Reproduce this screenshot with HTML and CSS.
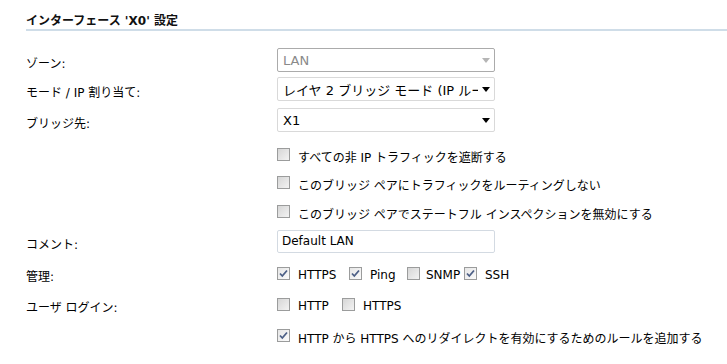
FILE: index.html
```html
<!DOCTYPE html>
<html lang="ja">

<head>
  <meta charset="UTF-8">
  <title>インターフェース設定</title>
  <link rel="stylesheet" href="styles.css">
</head>
<body>
  <div class="panel">
    <h2 class="title">インターフェース 'X0' 設定</h2>

    <!-- ゾーン / モード / ブリッジ -->
    <div class="row ctl zone">
      <div class="label">ゾーン:</div>
      <div class="select disabled">
        <span class="value">LAN</span>
        <svg class="arrow" width="8" height="5" viewBox="0 0 8 5"><polygon points="0,0 8,0 4,5"/></svg>
      </div>
    </div>
    <div class="row ctl">
      <div class="label">モード / IP 割り当て:</div>
      <div class="select">
        <span class="value">レイヤ 2 ブリッジ モード (IP ルーティングなし)</span>
        <svg class="arrow" width="8" height="5" viewBox="0 0 8 5"><polygon points="0,0 8,0 4,5"/></svg>
      </div>
    </div>
    <div class="row ctl bridge">
      <div class="label">ブリッジ先:</div>
      <div class="select">
        <span class="value">X1</span>
        <svg class="arrow" width="8" height="5" viewBox="0 0 8 5"><polygon points="0,0 8,0 4,5"/></svg>
      </div>
    </div>

    <!-- ブリッジ オプション -->
    <div class="row check first-check">
      <div class="label"></div>
      <div class="opts">
        <label class="opt"><span class="cb"></span>すべての非 IP トラフィックを遮断する</label>
      </div>
    </div>
    <div class="row check tight">
      <div class="label"></div>
      <div class="opts">
        <label class="opt"><span class="cb"></span>このブリッジ ペアにトラフィックをルーティングしない</label>
      </div>
    </div>
    <div class="row check">
      <div class="label"></div>
      <div class="opts">
        <label class="opt"><span class="cb"></span>このブリッジ ペアでステートフル インスペクションを無効にする</label>
      </div>
    </div>

    <!-- コメント -->
    <div class="row ctl comment">
      <div class="label">コメント:</div>
      <input class="text-input" type="text" value="Default LAN">
    </div>

    <!-- 管理 -->
    <div class="row check manage">
      <div class="label">管理:</div>
      <div class="opts">
        <label class="opt w72"><span class="cb on"><svg width="11" height="11" viewBox="0 0 11 11"><path d="M2 5.5 L4.3 8 L9 2.5"/></svg></span>HTTPS</label>
        <label class="opt w58"><span class="cb on"><svg width="11" height="11" viewBox="0 0 11 11"><path d="M2 5.5 L4.3 8 L9 2.5"/></svg></span>Ping</label>
        <label class="opt w57 near"><span class="cb"></span>SNMP</label>
        <label class="opt"><span class="cb on"><svg width="11" height="11" viewBox="0 0 11 11"><path d="M2 5.5 L4.3 8 L9 2.5"/></svg></span>SSH</label>
      </div>
    </div>

    <!-- ユーザ ログイン -->
    <div class="row check login">
      <div class="label">ユーザ ログイン:</div>
      <div class="opts">
        <label class="opt w65"><span class="cb"></span>HTTP</label>
        <label class="opt"><span class="cb"></span>HTTPS</label>
      </div>
    </div>
    <div class="row check login">
      <div class="label"></div>
      <div class="opts">
        <label class="opt"><span class="cb on"><svg width="11" height="11" viewBox="0 0 11 11"><path d="M2 5.5 L4.3 8 L9 2.5"/></svg></span>HTTP から HTTPS へのリダイレクトを有効にするためのルールを追加する</label>
      </div>
    </div>
  </div>
</body>

</html>
```

FILE: styles.css
```css
/* 共通 */
body {
  margin: 0;
  background: #fff;
  color: #000;
  font-family: "DejaVu Sans", "Noto Sans CJK JP", sans-serif;
  font-size: 12px;
}

.panel {
  padding-left: 26px;
}

.title {
  margin: 0;
  padding-top: 14px;
  height: 15px;
  line-height: 15px;
  font-size: 12px;
  font-weight: bold;
  color: #111;
  border-bottom: 2px solid #cfdde8;
}

/* 行 */
.row {
  display: grid;
  grid-template-columns: 251px 1fr;
  align-items: center;
  height: 24px;
  margin-top: 5px;
}

.row.zone {
  margin-top: 17px;
}

.row.bridge {
  margin-top: 7px;
}

.row.first-check {
  margin-top: 12px;
}

.row.tight {
  margin-top: 4px;
}

.row.comment {
  margin-top: 4px;
}

.row.manage {
  margin-top: 10px;
}

.row.login {
  margin-top: 7px;
}

.row.ctl .label {
  padding-top: 5px;
}

/* セレクト */
.select {
  box-sizing: border-box;
  width: 218px;
  height: 24px;
  display: flex;
  align-items: center;
  padding: 0 4px 0 5px;
  border: 1px solid #d9d9d9;
  border-radius: 2px;
  background: #fff;
  font-size: 13px;
  color: #000;
}

.select .value {
  flex: 1;
  overflow: hidden;
  white-space: nowrap;
}

.select .arrow {
  flex: none;
  margin-left: 4px;
  fill: #000;
}

.select.disabled {
  border-color: #ababab;
  color: #8a8a8a;
}

.select.disabled .arrow {
  fill: #b5b5b5;
}

/* テキスト入力 */
.text-input {
  box-sizing: border-box;
  width: 218px;
  height: 23px;
  margin: 0;
  padding: 0 4px;
  border: 1px solid #d3dae2;
  border-radius: 2px;
  font-family: "DejaVu Sans", "Noto Sans CJK JP", sans-serif;
  font-size: 12px;
  color: #000;
}

/* チェックボックス */
.opts {
  display: flex;
  align-items: center;
}

.opt {
  display: flex;
  align-items: center;
  gap: 8px;
  white-space: nowrap;
}

.opt.near {
  gap: 6px;
}

.w72 { width: 72px; }
.w58 { width: 58px; }
.w57 { width: 57px; }
.w65 { width: 65px; }

.cb {
  box-sizing: border-box;
  width: 13px;
  height: 13px;
  margin-bottom: 4px;
  border: 1px solid #9b9c9c;
  background: linear-gradient(135deg, #d6d6d6, #f3f3f3);
  display: flex;
  align-items: center;
  justify-content: center;
}

.cb.on {
  background: linear-gradient(135deg, #e6e6e6, #fbfbfb);
}

.cb svg path {
  fill: none;
  stroke: #4c5f86;
  stroke-width: 1.8;
}
```
